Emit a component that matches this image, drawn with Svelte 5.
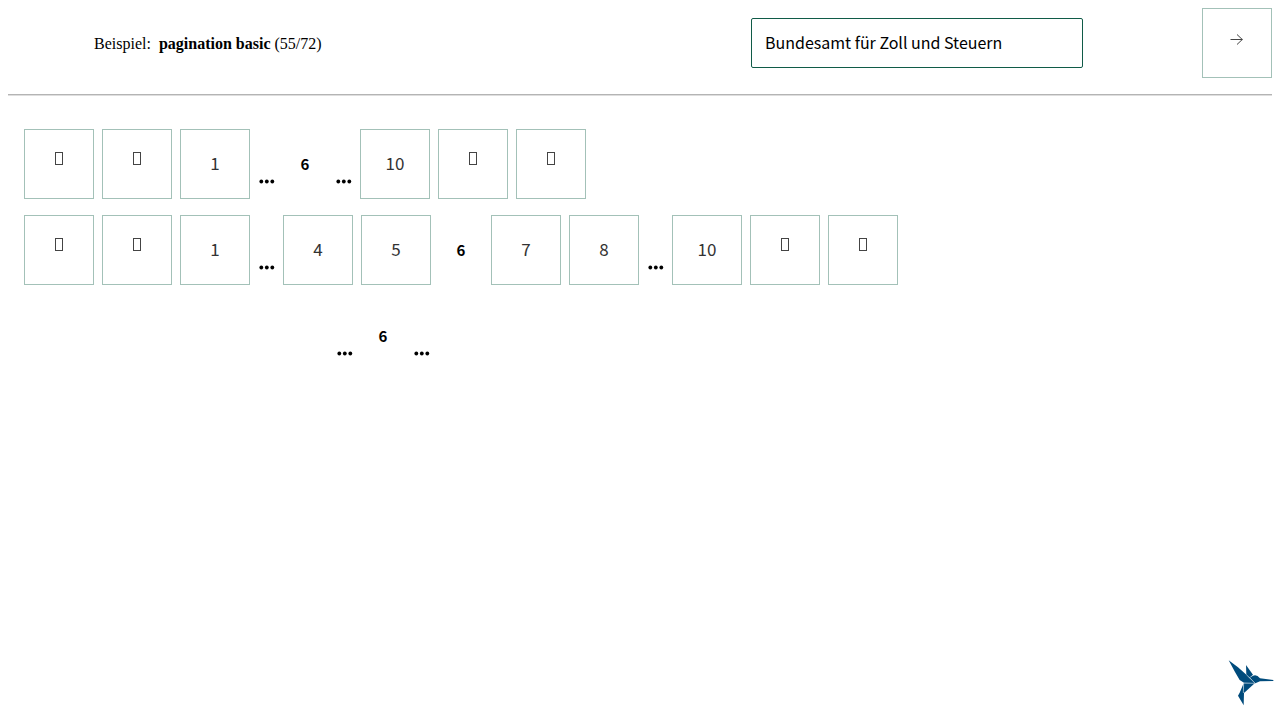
<script>
  const rows = [
    ['first', 'prev', '1', '…', '*6', '…', '10', 'next', 'last'],
    ['first', 'prev', '1', '…', '4', '5', '*6', '7', '8', '…', '10', 'next', 'last'],
    ['', '', '', '', '…', '*6', '…'],
  ];
  const labels = {
    first: 'Erste Seite',
    prev: 'Vorherige Seite',
    next: 'Nächste Seite',
    last: 'Letzte Seite',
  };
</script>

<header>
  <p class="example">Beispiel:&nbsp; <strong>pagination basic</strong> (55/72)</p>
  <select class="theme" aria-label="Theme">
    <option>Bundesamt für Zoll und Steuern</option>
  </select>
  <button class="box" aria-label="Nächstes Beispiel">
    <svg class="icon" width="14" height="14" viewBox="0 0 14 14">
      <path d="M0.5 8.5H12.5M7 3.5L12.3 8.5L7 13.5" />
    </svg>
  </button>
</header>
<hr />
<main>
  {#each rows as row}
    <nav aria-label="Seiten">
      {#each row as item}
        {#if item === ''}
          <span class="spacer"></span>
        {:else if item === '…'}
          <span class="dots"><svg width="17" height="5" viewBox="0 0 17 5" aria-hidden="true"><circle cx="3.3" cy="2.5" r="1.9" /><circle cx="8.8" cy="2.5" r="1.9" /><circle cx="14.3" cy="2.5" r="1.9" /></svg></span>
        {:else if item[0] === '*'}
          <span class="current" aria-current="page">{item.slice(1)}</span>
        {:else if labels[item]}
          <button class="box" aria-label={labels[item]}>
            <svg class="icon" width="14" height="14" viewBox="0 0 14 14">
              <rect x="3.5" y="0.5" width="7" height="12" />
            </svg>
          </button>
        {:else}
          <button class="box">{item}</button>
        {/if}
      {/each}
    </nav>
  {/each}
</main>
<svg class="logo" width="46" height="46" viewBox="24 24 138 138" aria-hidden="true">
  <path d="M26 25L54 46L80 69L88 78L105 93L72 92L59 84L45 60Z" />
  <path d="M78 39L99 68L88 77L79 69Z" />
  <path d="M89 77L99 71Q110 66 120 79L160 84V87L120 88L106 94Z" />
  <path d="M72 93H105L73 122L69 120Z" />
  <path d="M71 94L69 120L72 123L71 160L54 131L59 122Z" />
  <path class="fold" d="M79 68L90 78L105 94H72M71 94L70 122" />
</svg>

<style>
  :global(body) {
    margin: 0;
    background: #fff;
    color: #000;
  }

  header {
    display: flex;
    align-items: center;
    padding: 8px 8px 0 94px;
  }

  .example {
    flex: 1;
    margin: 0;
    padding-top: 2px;
    font: 16px/20px 'Liberation Serif', serif;
  }

  .theme {
    appearance: none;
    box-sizing: border-box;
    width: 332px;
    height: 50px;
    margin-right: 119px;
    padding: 0 13px 2px;
    border: 1px solid #105b48;
    border-radius: 2px;
    background: #fff;
    color: #000;
    font: 16px/24px 'Noto Sans CJK SC', sans-serif;
  }

  .box {
    display: flex;
    flex: none;
    align-items: center;
    justify-content: center;
    box-sizing: border-box;
    width: 70px;
    height: 70px;
    padding: 0 0 2px;
    border: 1px solid #a3c1b8;
    background: #fff;
    color: #333;
    font: 17px/24px 'Noto Sans CJK SC', sans-serif;
  }

  .icon {
    margin-bottom: 8px;
    fill: none;
    stroke: #444;
  }

  hr {
    height: 2px;
    margin: 16px 8px 0;
    border: 0;
    border-top: 1px solid #b4b4b4;
    box-sizing: border-box;
    background: #dedede;
  }

  main {
    display: flex;
    flex-direction: column;
    gap: 16px;
    padding: 33px 24px;
  }

  nav {
    display: flex;
    align-items: center;
    gap: 8px;
    height: 70px;
  }

  .spacer {
    width: 70px;
  }

  .dots {
    display: flex;
    width: 17px;
    padding-top: 35px;
  }

  .current {
    width: 44px;
    text-align: center;
    font: bold 15px/24px 'Noto Sans CJK SC', sans-serif;
  }

  .logo {
    position: fixed;
    right: 6px;
    bottom: 14px;
    fill: #004b7c;
  }

  .fold {
    fill: none;
    stroke: #b8cedc;
    stroke-width: 2;
  }
</style>
